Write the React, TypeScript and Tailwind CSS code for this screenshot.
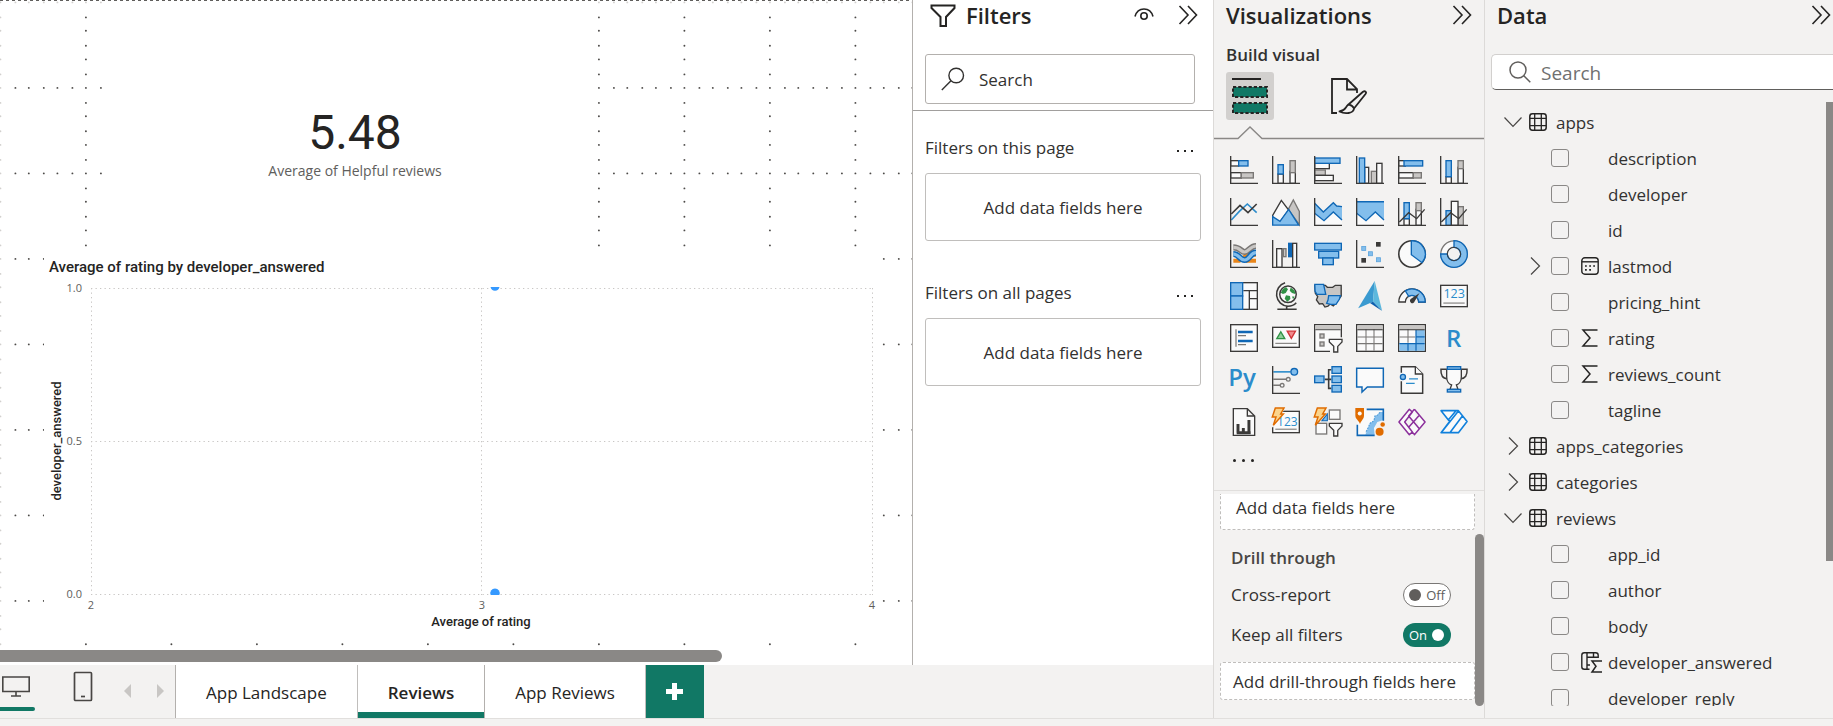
import React, { useState } from "react";

const K = "#3b3a39";
const BL = "#0f67b5";
const BF = "#83beec";
const GS = "#797775";
const GF = "#c8c6c4";
const W = "#fafafa";

type BoxProps = { x: number; y: number; w: number; h: number; f?: string; s?: string };

function Box({ x, y, w, h, f = W, s = K }: BoxProps) {
  return <rect x={x + 0.5} y={y + 0.5} width={w - 1} height={h - 1} fill={f} stroke={s} />;
}

const Axis = () => <path d="M.5 0V20.5H21" fill="none" stroke={K} />;

const Fold = () => (
  <path d="M2.5 .5H13L18.5 6V20.5H2.5Z M13 .5V6H18.5" fill={W} stroke={K} />
);

const MiniFunnel = () => (
  <path d="M11.5 11.5H21V13.5L17.8 16.8V21H14.8V16.8L11.5 13.5Z" fill={W} stroke={K} />
);

const Bolt = () => (
  <path d="M2.5 0H9L6.5 4.5H8.5L1 13L3 6.8H0.2Z" fill="#fbd48c" stroke="#e06c00" strokeWidth="1.1" />
);

const visuals: { name: string; art: React.ReactNode }[] = [
  {
    name: "Stacked bar chart",
    art: (
      <>
        <Box x={0} y={3} w={7} h={5} />
        <Box x={6} y={3} w={8} h={5} f={BF} s={BL} />
        <Box x={0} y={12} w={9} h={5} />
        <Box x={8} y={12} w={10} h={5} f={GF} s={GS} />
        <Axis />
      </>
    ),
  },
  {
    name: "Stacked column chart",
    art: (
      <>
        <Box x={4} y={13} w={5} h={8} />
        <Box x={4} y={6} w={5} h={8} f={BF} s={BL} />
        <Box x={13} y={11} w={5} h={10} />
        <Box x={13} y={3} w={5} h={10} f={GF} s={GS} />
        <Axis />
      </>
    ),
  },
  {
    name: "Clustered bar chart",
    art: (
      <>
        <Box x={0} y={5} w={12} h={5} />
        <Box x={0} y={10} w={9} h={5} f={GF} s={GS} />
        <Box x={0} y={14} w={15} h={5} />
        <Box x={0} y={1} w={20} h={5} f={BF} s={BL} />
        <Axis />
      </>
    ),
  },
  {
    name: "Clustered column chart",
    art: (
      <>
        <Box x={6} y={8} w={4} h={13} />
        <Box x={11} y={11} w={5} h={10} f={GF} s={GS} />
        <Box x={15} y={5} w={5} h={16} />
        <Box x={2} y={1} w={5} h={20} f={BF} s={BL} />
        <Axis />
      </>
    ),
  },
  {
    name: "100% stacked bar chart",
    art: (
      <>
        <Box x={0} y={3} w={6} h={5} />
        <Box x={4} y={3} w={15} h={5} f={BF} s={BL} />
        <Box x={0} y={12} w={12} h={5} />
        <Box x={11} y={12} w={7} h={5} f={GF} s={GS} />
        <Axis />
      </>
    ),
  },
  {
    name: "100% stacked column chart",
    art: (
      <>
        <Box x={4} y={15} w={5} h={6} />
        <Box x={4} y={3} w={5} h={13} f={BF} s={BL} />
        <Box x={13} y={8} w={5} h={13} />
        <Box x={13} y={3} w={5} h={7} f={GF} s={GS} />
        <Axis />
      </>
    ),
  },
  {
    name: "Line chart",
    art: (
      <>
        <path d="M1 16.5L7 10L13 4.5L20 11" fill="none" stroke="#2b8ccb" strokeWidth="1.2" />
        <path d="M1 12L7.5 5.5L13.5 11L20 4.5" fill="none" stroke={K} strokeWidth="1.2" />
        <Axis />
      </>
    ),
  },
  {
    name: "Area chart",
    art: (
      <>
        <path d="M12.5 8L16 1.5L20.5 10V20L12.5 9Z" fill={GF} stroke={GS} />
        <path d="M.5 13L7 1.8L12.5 9L6 18L.5 15Z" fill={W} stroke={K} />
        <path d="M.5 14L6 17.5L12.5 8.5L20 20.3H.5Z" fill={BF} stroke={BL} />
      </>
    ),
  },
  {
    name: "Stacked area chart",
    art: (
      <>
        <path d="M.5 11.5L7.5 17L14.5 10.5L21 16.5V20.5H.5Z" fill={W} />
        <path d="M.5 4L7 10.5L14.5 3.5L17 6L21 6.5V16.5L14.5 10.5L7.5 17L.5 11.5Z" fill={BF} />
        <path d="M.5 4L7 10.5L14.5 3.5L17 6L21 6.5M21 16.5L14.5 10.5L7.5 17L.5 11.5" fill="none" stroke={BL} />
        <Axis />
      </>
    ),
  },
  {
    name: "100% stacked area chart",
    art: (
      <>
        <path d="M.5 11.5L7.5 17L14.5 10.5L21 16.5V20.5H.5Z" fill={W} />
        <path d="M.5 2.8H21V16.5L14.5 10.5L7.5 17L.5 11.5Z" fill={BF} />
        <path d="M.5 2.8H21M21 16.5L14.5 10.5L7.5 17L.5 11.5" fill="none" stroke={BL} />
        <Axis />
      </>
    ),
  },
  {
    name: "Line and stacked column chart",
    art: (
      <>
        <Box x={4} y={15} w={5} h={6} />
        <Box x={4} y={3} w={5} h={13} f={BF} s={BL} />
        <Box x={13} y={8} w={5} h={13} />
        <Box x={13} y={3} w={5} h={7} f={GF} s={GS} />
        <path d="M1 18L8 11L14 15.5L20 8.5" fill="none" stroke={K} />
        <Axis />
      </>
    ),
  },
  {
    name: "Line and clustered column chart",
    art: (
      <>
        <Box x={4} y={9} w={5} h={12} f={BF} s={BL} />
        <Box x={13} y={6} w={5} h={15} f={GF} s={GS} />
        <Box x={8} y={2} w={6} h={19} />
        <path d="M1 18L8 11L14 15.5L20 8.5" fill="none" stroke={K} />
        <Axis />
      </>
    ),
  },
  {
    name: "Ribbon chart",
    art: (
      <>
        <path d="M2.5 15.5H7L13 11H19.5M12 15.5H19.5" fill="none" stroke="#e9861b" strokeWidth="3" />
        <path d="M2.5 5.5C8 5.5 8 9 11 9S15 4.5 19.5 4.5" fill="none" stroke={GS} strokeWidth="4.6" />
        <path d="M2.5 5.5C8 5.5 8 9 11 9S15 4.5 19.5 4.5" fill="none" stroke={GF} strokeWidth="2.4" />
        <path d="M2.5 10.5C7 10.5 7 15 11 15S15 9.5 19.5 9.5" fill="none" stroke={BL} strokeWidth="4.6" />
        <path d="M2.5 10.5C7 10.5 7 15 11 15S15 9.5 19.5 9.5" fill="none" stroke={BF} strokeWidth="2.4" />
        <Axis />
      </>
    ),
  },
  {
    name: "Waterfall chart",
    art: (
      <>
        <Box x={3} y={6} w={5} h={15} />
        <Box x={15} y={2} w={4} h={19} />
        <Box x={8} y={6} w={3} h={7} f={GF} s={GS} />
        <Box x={12} y={2} w={3} h={11} f={BL} s={BL} />
        <Axis />
      </>
    ),
  },
  {
    name: "Funnel",
    art: (
      <>
        <Box x={0} y={2} w={21} h={6} f={BF} s={BL} />
        <Box x={3} y={8} w={16} h={6} f={BF} s={BL} />
        <Box x={6} y={13} w={9} h={6} f={BF} s={BL} />
      </>
    ),
  },
  {
    name: "Scatter chart",
    art: (
      <>
        <g fill={K}>
          <rect x="15" y="1.5" width="3.5" height="3.5" />
          <rect x="4" y="13.5" width="3.5" height="3.5" />
        </g>
        <g fill={BF} stroke="#5ba3dc" strokeWidth=".6">
          <rect x="4.3" y="4.8" width="3" height="3" />
          <rect x="9.3" y="8.8" width="3" height="3" />
          <rect x="15.3" y="13.3" width="3" height="3" />
        </g>
        <Axis />
      </>
    ),
  },
  {
    name: "Pie chart",
    art: (
      <>
        <circle cx="10.5" cy="10.5" r="9.9" fill={W} stroke={K} strokeWidth="1.2" />
        <path d="M10 .6A9.9 9.9 0 0 1 18 17L10 11Z" fill={BF} stroke={BL} />
      </>
    ),
  },
  {
    name: "Donut chart",
    art: (
      <>
        <circle cx="10.5" cy="10.5" r="7.5" fill="none" stroke={GS} strokeWidth="5.8" />
        <circle cx="10.5" cy="10.5" r="7.5" fill="none" stroke={W} strokeWidth="3.8" />
        <path
          d="M10.5 .5A10 10 0 1 1 .5 10.5H5.5A5 5 0 1 0 10.5 5.5Z"
          fill={BF}
          stroke={BL}
        />
        <circle cx="10.5" cy="10.5" r="5" fill="none" stroke={K} strokeWidth=".7" />
      </>
    ),
  },
  {
    name: "Treemap",
    art: (
      <>
        <Box x={0} y={0} w={21} h={21} />
        <path d="M10 6.5H20.5M14.5 6.5V20.5M14.5 12.5H20.5" stroke={K} />
        <Box x={0} y={0} w={10} h={11} f={BF} s={BL} />
        <Box x={0} y={10} w={10} h={11} f={BF} s={BL} />
      </>
    ),
  },
  {
    name: "Map",
    art: (
      <>
        <circle cx="12" cy="9.2" r="6.2" fill={W} stroke={K} strokeWidth="1.1" />
        <path
          d="M8 5.5L10.5 3.8L12 5.5L10.3 8.2L8.2 9L6.6 8ZM14 4.2L17 6.5L17.5 9L15 8.3L13.3 6.5ZM10.5 10L13.5 10.5L13.8 12.8L11.5 14.8L9.5 12.5ZM15 10.8L17 10.8L15.8 13Z"
          fill="#2f9245"
        />
        <path d="M9.8 .6A9 9 0 0 0 12 18.2C14.6 18.2 16.6 17.3 18.2 15.6M11 18.2V20.4M4 20.4H18.5" fill="none" stroke={K} strokeWidth="1.2" />
      </>
    ),
  },
  {
    name: "Filled map",
    art: (
      <>
        <path
          d="M.6 2.5H8.5L10 4H14L16 2.5H20.4V10.5L17.5 14.5L14.5 18L12 16.5L10.5 18.2L8.2 18.8L6.5 16.2L4 16.5L1.8 13.5L2.8 11L1 8.5Z"
          fill={GF}
          stroke={K}
        />
        <path d="M.6 1.8H7.2L8.8 9.3H2.2L.8 7Z" fill={BF} stroke={BL} />
        <path d="M11 10.2H19.8L19 13L16.5 16.8H12.5L9.5 16L10.5 13.5Z" fill={BF} stroke={BL} />
      </>
    ),
  },
  {
    name: "Azure map",
    art: (
      <>
        <path d="M14 -.8L1.6 19.6L12.8 14.8Z" fill="#3a9ad0" />
        <path d="M14 -.8L12.8 14.8L19.6 21.5Z" fill="#5cb8dd" />
        <path d="M12.8 14.8L10.5 15.8L19.6 21.8Z" fill="#0a5fae" />
      </>
    ),
  },
  {
    name: "Gauge",
    art: (
      <>
        <path d="M.6 15A9.9 9.9 0 0 1 20.4 15H15.5A5 5 0 0 0 5.5 15Z" fill={W} stroke={K} />
        <path d="M5.5 6.6A9.9 9.9 0 0 1 20.4 15H15.5A5 5 0 0 0 8 10.7Z" fill={BF} stroke={BL} />
        <path d="M16.2 8.3L12.5 14.5A1.8 1.8 0 1 1 9.5 12.8Z" fill={K} />
      </>
    ),
  },
  {
    name: "Card",
    art: (
      <>
        <Box x={0} y={2} w={21} h={17} />
        <text x="10.6" y="12.3" textAnchor="middle" fontFamily="Open Sans, sans-serif" fontSize="9.4" fill="#2b8ccb">
          123
        </text>
        <path d="M2.5 15.8H18.5" stroke={GS} strokeWidth=".8" />
      </>
    ),
  },
  {
    name: "Multi-row card",
    art: (
      <>
        <Box x={0} y={0} w={21} h={21} />
        <path d="M4.5 4V17M6 8.7H12M6 15.4H12" stroke={GS} strokeWidth=".9" />
        <path d="M6 6H17M6 12.7H17" stroke={BL} strokeWidth="1.8" />
      </>
    ),
  },
  {
    name: "KPI",
    art: (
      <>
        <Box x={0} y={2} w={21} h={16} />
        <path d="M3.6 11L6.6 5.8L9.6 11Z" fill="#8fcf9a" stroke="#2f9245" />
        <path d="M11.4 5.4H17.6L14.5 10.8Z" fill="#f08a8c" stroke="#d13438" />
        <path d="M2.5 14.5H18.5" stroke={GS} strokeWidth=".8" />
      </>
    ),
  },
  {
    name: "Slicer",
    art: (
      <>
        <path d="M20.5 10V.5H.5V20.5H12" fill={W} stroke={K} />
        <path d="M1 1H20V4H1Z" fill={GF} />
        <path d="M1 4.3H20" stroke={K} strokeWidth=".7" />
        <Box x={4} y={7} w={4} h={4} f={GF} s={GS} />
        <Box x={4} y={13} w={4} h={4} f={GF} s={GS} />
        <MiniFunnel />
      </>
    ),
  },
  {
    name: "Table",
    art: (
      <>
        <Box x={0} y={0} w={21} h={21} />
        <path d="M1 1H20V4H1Z" fill={GF} />
        <path d="M1 9.7H20M1 14.7H20M7.5 4V20M13.5 4V20" stroke={GS} strokeWidth=".8" />
        <path d="M1 4.3H20" stroke={K} strokeWidth=".8" />
      </>
    ),
  },
  {
    name: "Matrix",
    art: (
      <>
        <Box x={0} y={0} w={21} h={21} />
        <path d="M1 1H20V4H1Z" fill={GF} />
        <path d="M13.5 4.5H20V20H1V14.7H13.5Z" fill={BF} />
        <path d="M1 9.7H13M7.5 4V14" stroke={GS} strokeWidth=".8" />
        <path d="M1 14.7H20M13.5 4.5V20M7.5 15V20M13.5 9.7H20" stroke={BL} strokeWidth=".9" />
        <path d="M1 4.3H20" stroke={K} strokeWidth=".8" />
      </>
    ),
  },
  {
    name: "R script visual",
    art: (
      <text x="4.5" y="17" fontFamily="Open Sans, sans-serif" fontSize="18" fontWeight="600" fill="#2b8ccb">
        R
      </text>
    ),
  },
  {
    name: "Python visual",
    art: (
      <text x="-1.4" y="15" fontFamily="Open Sans, sans-serif" fontSize="18" fontWeight="600" fill="#2b8ccb">
        Py
      </text>
    ),
  },
  {
    name: "Key influencers",
    art: (
      <>
        <path d="M1 4.4H14" stroke="#2b8ccb" strokeWidth="1.2" />
        <circle cx="16.7" cy="4.4" r="2.5" fill={BF} stroke={BL} />
        <path d="M1 10H10.5M1 14.5H6" stroke={GS} strokeWidth="1.1" />
        <circle cx="12.2" cy="10" r="1.4" fill={W} stroke={GS} />
        <circle cx="7.6" cy="14.5" r="1.4" fill={W} stroke={GS} />
        <Axis />
      </>
    ),
  },
  {
    name: "Decomposition tree",
    art: (
      <>
        <path d="M8 10H13M13 2.8H11V16.8H13" fill="none" stroke={K} strokeWidth="1.2" />
        <Box x={0} y={7} w={8} h={6} f={BF} s={BL} />
        <Box x={13} y={0} w={8} h={6} f={BF} s={BL} />
        <Box x={13} y={7} w={8} h={6} f={BF} s={BL} />
        <Box x={13} y={14} w={8} h={6} f={BF} s={BL} />
      </>
    ),
  },
  {
    name: "Q&A",
    art: <path d="M.5 1.7H20.5V15.7H8.5L4.5 19.5V15.7H.5Z" fill={W} stroke={BL} strokeWidth="1.1" />,
  },
  {
    name: "Narrative",
    art: (
      <>
        <path d="M2.5 5V.5H13L18.5 6V20.5H2.5V11.5" fill={W} stroke={K} strokeWidth="1.1" />
        <path d="M13 .5V6H18.5" fill={W} stroke={K} />
        <circle cx="3.7" cy="8.2" r="1.9" fill={BF} stroke={BL} />
        <path d="M8.3 9.7H15M6 13H12.5" stroke="#2b8ccb" />
      </>
    ),
  },
  {
    name: "Goals",
    art: (
      <>
        <path d="M5 2.5H.7C.5 7 2 9.5 5.5 9.5M16 2.5H20.3C20.5 7 19 9.5 15.5 9.5" fill="none" stroke={K} strokeWidth="1.1" />
        <path d="M5 2.5H16V8C16 11.5 14 13.7 12.3 14.2L13.5 17.5H7.5L8.7 14.2C7 13.7 5 11.5 5 8Z" fill={W} stroke={K} />
        <Box x={5} y={0} w={11} h={3} f={BF} s={BL} />
        <Box x={5} y={17} w={11} h={3} f={BF} s={BL} />
      </>
    ),
  },
  {
    name: "Paginated report",
    art: (
      <>
        <Fold />
        <path d="M6 12V18.5M10 15V18.5M14.2 9V18.5M5 18.5H15.5" stroke={K} strokeWidth="2.2" />
      </>
    ),
  },
  {
    name: "Card (new)",
    art: (
      <>
        <Box x={0} y={2} w={21} h={17} />
        <text x="11.5" y="13.3" textAnchor="middle" fontFamily="Open Sans, sans-serif" fontSize="9" fill="#2b8ccb">
          123
        </text>
        <path d="M2.5 15.9H18.5" stroke={GS} strokeWidth=".8" />
        <path d="M-1 1H9.5L6.5 5.5L1 14.5H-1Z" fill="#f3f2f1" />
        <Bolt />
      </>
    ),
  },
  {
    name: "Slicer (new)",
    art: (
      <>
        <Box x={11} y={1} w={9} h={8} s={GS} />
        <Box x={1} y={11} w={9} h={9} s={GS} />
        <path d="M6 9.5L10 4.5V9.5Z" fill={BF} stroke={BL} strokeWidth=".8" />
        <Bolt />
        <MiniFunnel />
      </>
    ),
  },
  {
    name: "ArcGIS Maps",
    art: (
      <>
        <path d="M1 1H20.5V9H15L14 21H1Z" fill={W} />
        <path d="M20.5 3H18L16 5.5L14.2 6L13.5 9.5L10.5 11.5L9 15L7 20H14L13.5 15L16 10.5L20.5 9Z" fill={BF} />
        <path d="M8 1H20.5V9.5M1 12.5V20.5H14" fill="none" stroke={BL} strokeWidth="1.2" />
        <path d="M18 3.2L16 5.5L14.2 6L13.5 9.5L10.5 11.5L9 15L7.2 18.5" fill="none" stroke="#4d9bd8" strokeWidth=".8" strokeDasharray="1.4 .8" />
        <path d="M-.5 0H6V5.5C6 8.5 4.5 8.5 3 12C1.5 8.5 -.5 8.5 -.5 5.5Z" fill="#e06c00" />
        <circle cx="2.8" cy="4.2" r="1.5" fill={W} />
        <circle cx="17.7" cy="17.8" r="3" fill="#e06c00" />
        <circle cx="20" cy="12.3" r="1.7" fill="#e06c00" />
      </>
    ),
  },
  {
    name: "Power Apps",
    art: (
      <path
        d="M8.5 1L.7 10.5L8.5 20L10.8 18L5 10.5L10.8 3ZM12.3 1L20.3 10.5L12.3 20L8 14.5L16 5.5M12.3 1L8 6L16 15.5"
        fill={W}
        stroke="#8b2f9b"
        strokeWidth="1.1"
        strokeLinejoin="round"
      />
    ),
  },
  {
    name: "Power Automate",
    art: (
      <path
        d="M.8 2H13.8L20.3 10.2L13.8 18.5H.8L7.2 10.2ZM6.2 9L12 2M1 18.3L13.8 2.2M7.4 18.5L16.8 6"
        fill={W}
        stroke="#1080dc"
        strokeWidth="1.2"
        strokeLinejoin="round"
      />
    ),
  },
];

const DoubleChevron = () => (
  <svg viewBox="0 0 20 20" className="size-5" fill="none" stroke="#252423" strokeWidth="1.6">
    <path d="M1.5 1L10 10L1.5 19M10 1L18.5 10L10 19" />
  </svg>
);

const TableIcon = () => (
  <svg viewBox="0 0 18 18" className="size-[18px] shrink-0" fill="none" stroke="#252423" strokeWidth="1.5">
    <rect x=".8" y=".8" width="16.4" height="16.4" rx="2.6" />
    <path d="M5.7 1V17M12.3 1V17M1 5.3H17M1 12.7H17" strokeWidth="1.3" />
  </svg>
);

const CalendarIcon = () => (
  <svg viewBox="0 0 18 18" className="size-[18px]" fill="none" stroke="#252423" strokeWidth="1.4">
    <rect x=".8" y=".8" width="16.4" height="16.4" rx="3" />
    <path d="M1 4.8H17" />
    <path d="M8.2 9H10M12.2 9H14M4 12.8H5.8M8.2 12.8H10M4 9H5.8M12.2 9H14" strokeWidth="1.7" />
  </svg>
);

const SigmaIcon = () => (
  <svg viewBox="0 0 18 18" className="size-[18px]" fill="none" stroke="#252423" strokeWidth="1.5">
    <path d="M16.5 .9H2L9 9L2 17.1H16.5" />
  </svg>
);

const CalculatedIcon = () => (
  <svg viewBox="0 0 21 21" className="size-[21px] shrink-0" fill="none" stroke="#252423" strokeWidth="1.4">
    <path d="M17.2 6V3.3A2.5 2.5 0 0 0 14.7 .8H3.3A2.5 2.5 0 0 0 .8 3.3V14.7A2.5 2.5 0 0 0 3.3 17.2H8.5M6 1V17M6 5.2H17M12.5 1V5M6 13H9" />
    <path d="M21 9H11L15 14.3L11 20H21" strokeWidth="1.5" />
  </svg>
);

const Chevron = ({ open }: { open: boolean }) => (
  <svg viewBox="0 0 18 18" className="size-[18px] shrink-0" fill="none" stroke="#484644" strokeWidth="1.2">
    <path d={open ? "M.5 4.5L9 13.5L17.5 4.5" : "M5 .5L13.5 9L5 17.5"} />
  </svg>
);

const majors = Array.from({ length: 11 }, (_, i) => i * 85.5);
const minors = [0, 15, 28.4, 43.4, 57, 72];
const ticks = majors.flatMap((m) => minors.map((o) => m + o));

function CanvasGrid() {
  const seen = (x: number, y: number) =>
    !(x > 102 && x < 590 && y < 260) && !(x > 44 && x < 877 && y > 256 && y < 640);
  const dots: React.ReactNode[] = [];
  const add = (x: number, y: number, faint: boolean) => {
    if (x < 914 && y < 650 && seen(x, y))
      dots.push(<circle key={`${x}-${y}`} cx={x} cy={y} r=".95" fill={faint ? "#d2d0ce" : "#4c4a48"} />);
  };
  majors.forEach((m, i) => {
    ticks.forEach((t, j) => {
      add(m + 0.4, t + 2.4, i === 0 || j === 0);
      if (j % 6 !== 0) add(t + 0.4, m + 2.4, i === 0);
    });
  });
  return (
    <svg aria-hidden="true" className="absolute inset-0 size-full">
      <path d="M0 .5H914" stroke="#605e5c" strokeDasharray="3 3" />
      {dots}
    </svg>
  );
}

function ScatterChart() {
  const grid = { stroke: "#c8c6c4", strokeDasharray: "1.3 3.2", fill: "none" };
  return (
    <svg viewBox="44 257 833 383" className="block w-full" role="img" aria-label="Average of rating by developer_answered">
      <rect x="44" y="257" width="833" height="383" fill="#fff" />
      <g fontFamily="Roboto, sans-serif" fontWeight="500" fill="#252423">
        <text x="49" y="272" fontSize="15">Average of rating by developer_answered</text>
        <text x="481" y="626" fontSize="13">
          <tspan textAnchor="middle">Average of rating</tspan>
        </text>
        <text transform="translate(61 441) rotate(-90)" fontSize="13" textAnchor="middle">developer_answered</text>
      </g>
      <g fontFamily="Open Sans, sans-serif" fontSize="11" fill="#605e5c">
        <g textAnchor="end">
          <text x="82" y="292">1.0</text>
          <text x="82" y="445">0.5</text>
          <text x="82" y="598">0.0</text>
        </g>
        <g textAnchor="middle">
          <text x="91" y="609">2</text>
          <text x="482" y="609">3</text>
          <text x="872" y="609">4</text>
        </g>
      </g>
      <path d="M91 288.5H872.5M91 441.5H872.5M91 594.5H872.5" {...grid} />
      <path d="M91.5 288V595M481.5 288V595M872.5 288V595" {...grid} />
      <g fill="#3599ff">
        <path d="M490.5 287H499.5A4.6 4.6 0 0 1 490.5 287Z" />
        <path d="M490.7 595A4.7 4.7 0 1 1 499.3 595Z" />
      </g>
    </svg>
  );
}

function FilterGroup({ title }: { title: string }) {
  return (
    <section className="flex flex-col">
      <div className="flex h-8 items-center justify-between pr-5">
        <h3>{title}</h3>
        <button aria-label={`${title} options`} className="flex h-2 items-end gap-[5px] pt-2">
          <i className="size-[2px] bg-[#252423]" />
          <i className="size-[2px] bg-[#252423]" />
          <i className="size-[2px] bg-[#252423]" />
        </button>
      </div>
      <button className="mt-[9px] mr-3 h-[68px] rounded-[3px] border border-[#c0bebc] bg-white pt-[2px]">
        Add data fields here
      </button>
    </section>
  );
}

function Toggle({ label, initial }: { label: string; initial: boolean }) {
  const [on, setOn] = useState(initial);
  return (
    <label className="relative flex h-10 items-center justify-between">
      {label}
      <input type="checkbox" role="switch" className="sr-only" checked={on} onChange={() => setOn(!on)} />
      <span
        className={
          on
            ? "flex h-6 w-12 items-center justify-between rounded-full bg-[#117865] pr-[7px] pl-[6px] text-[13px] leading-5 text-white"
            : "flex h-6 w-12 flex-row-reverse items-center justify-between rounded-full border border-[#797775] bg-white px-[5px] text-[13px] leading-5 text-[#605e5c]"
        }
      >
        {on ? "On" : "Off"}
        <i className={on ? "size-3 rounded-full bg-white" : "size-3 rounded-full bg-[#605e5c]"} />
      </span>
    </label>
  );
}

type Field = { name: string; icon?: React.ReactNode; expandable?: boolean };
const tables: { name: string; open: boolean; fields: Field[] }[] = [
  {
    name: "apps",
    open: true,
    fields: [
      { name: "description" },
      { name: "developer" },
      { name: "id" },
      { name: "lastmod", icon: <CalendarIcon />, expandable: true },
      { name: "pricing_hint" },
      { name: "rating", icon: <SigmaIcon /> },
      { name: "reviews_count", icon: <SigmaIcon /> },
      { name: "tagline" },
    ],
  },
  { name: "apps_categories", open: false, fields: [] },
  { name: "categories", open: false, fields: [] },
  {
    name: "reviews",
    open: true,
    fields: [
      { name: "app_id" },
      { name: "author" },
      { name: "body" },
      { name: "developer_answered", icon: <CalculatedIcon /> },
      { name: "developer_reply" },
    ],
  },
];

function FieldTree() {
  return (
    <ul>
      {tables.map((t) => (
        <li key={t.name}>
          <button className="flex h-9 w-full items-center pl-[19px]" aria-expanded={t.open}>
            <Chevron open={t.open} />
            <span className="mr-[9px] ml-[7px]">
              <TableIcon />
            </span>
            <span className="pt-[2px]">{t.name}</span>
          </button>
          <ul>
            {t.fields.map((f) => (
              <li key={f.name} className="flex h-9 items-center pl-[41px]">
                <span className="flex w-[25px] items-center">
                  {f.expandable && (
                    <button aria-label={`Expand ${f.name}`}>
                      <Chevron open={false} />
                    </button>
                  )}
                </span>
                <label className="flex items-center">
                  <input
                    type="checkbox"
                    className="size-[18px] appearance-none rounded-[3px] border border-[#8a8886] bg-transparent checked:bg-[#117865]"
                  />
                  <span className="ml-3 flex w-[27px] items-center">{f.icon}</span>
                  <span className="pt-[2px]">{f.name}</span>
                </label>
              </li>
            ))}
          </ul>
        </li>
      ))}
    </ul>
  );
}

const pages = ["App Landscape", "Reviews", "App Reviews"];

export default function App() {
  return (
    <div className="flex h-screen flex-col overflow-hidden bg-[#f3f2f1] font-['Open_Sans',sans-serif] text-[17px] leading-6 text-[#323130]">
      <div className="flex min-h-0 flex-1 border-b border-[#e1dfdd]">
        <div className="flex min-w-0 flex-1 flex-col">
          <div className="flex min-h-0 flex-1 bg-white">
            <main className="relative flex min-w-0 flex-1 flex-col overflow-hidden border-r border-[#b3b0ad]">
              <CanvasGrid />
              <section className="relative ml-[102px] flex h-[257px] w-[506px] shrink-0 flex-col items-center pt-[105px] font-['Roboto',sans-serif]">
                <div className="text-[48px] leading-[56px] text-[#252423]">5.48</div>
                <div className="font-['Open_Sans',sans-serif] text-[14px] leading-5 text-[#605e5c]">
                  Average of Helpful reviews
                </div>
              </section>
              <section className="relative mr-[35px] ml-11">
                <ScatterChart />
              </section>
              <div className="relative mt-auto mb-[3px] h-3 w-[722px] shrink-0 rounded-r-full bg-[#8a8886]" />
            </main>

            <aside className="flex w-[300px] shrink-0 flex-col">
              <header className="flex h-[54px] items-start pt-[3px] pr-[15px] pl-[17px]">
                <svg viewBox="0 0 26 24" className="mt-px h-6 w-[26px]" fill="none" stroke="#252423" strokeWidth="2">
                  <path d="M1.5 1.5H24.5V4L16 13V22H10.5V13L1.5 4Z" />
                </svg>
                <h2 className="ml-[10px] text-[22px] font-semibold text-[#252423]">Filters</h2>
                <button aria-label="Show filters" className="mt-[5px] ml-auto">
                  <svg viewBox="0 0 20 13" className="h-[13px] w-5" fill="none" stroke="#252423" strokeWidth="1.6">
                    <path d="M1 8.5C2.5 3 6 1 10 1S17.5 3 19 8.5" />
                    <circle cx="10" cy="8" r="3.2" />
                  </svg>
                </button>
                <button aria-label="Collapse filters" className="mt-[2px] ml-6">
                  <DoubleChevron />
                </button>
              </header>
              <div className="border-b border-[#a19f9d] pr-[18px] pb-[6px] pl-3">
                <label className="flex h-[50px] items-center rounded-[3px] border border-[#b3b0ad] pl-[15px]">
                  <svg viewBox="0 0 24 24" className="size-6 shrink-0" fill="none" stroke="#323130" strokeWidth="1.4">
                    <circle cx="15.2" cy="8.5" r="7.3" />
                    <path d="M10 13.8L.8 23" />
                  </svg>
                  <input
                    aria-label="Search filters"
                    placeholder="Search"
                    className="ml-[14px] w-full min-w-0 bg-transparent pt-[2px] outline-none placeholder:text-[#323130]"
                  />
                </label>
              </div>
              <div className="flex flex-col gap-9 pt-[21px] pl-3">
                <FilterGroup title="Filters on this page" />
                <FilterGroup title="Filters on all pages" />
              </div>
            </aside>
          </div>

          <footer className="flex h-[53px] shrink-0">
            <div className="flex w-[175px] items-start">
              <button aria-label="Desktop layout" className="flex h-[46px] w-[35px] flex-col items-start justify-between pt-[11px]">
                <svg viewBox="0 0 30 22" className="ml-[1px] h-[22px] w-[30px]" fill="none" stroke="#484644" strokeWidth="1.6">
                  <path d="M1.8 1H28.2V15.5H1.8ZM15 16V20M10 20H20" />
                </svg>
                <span className="h-1 w-full rounded-r-full bg-[#117865]" />
              </button>
              <button aria-label="Mobile layout" className="mt-[6px] ml-[38px]">
                <svg viewBox="0 0 20 32" className="h-8 w-5" fill="none" stroke="#484644" strokeWidth="1.7">
                  <rect x="1.5" y="1.5" width="17" height="28" rx="1" />
                  <path d="M8 25.5H12" />
                </svg>
              </button>
              <button aria-label="Previous page" className="mt-[19px] ml-[31px]">
                <svg viewBox="0 0 7 14" className="h-[14px] w-[7px]">
                  <path d="M7 0V14L0 7Z" fill="#c8c6c4" />
                </svg>
              </button>
              <button aria-label="Next page" className="mt-[19px] ml-[26px]">
                <svg viewBox="0 0 7 14" className="h-[14px] w-[7px]">
                  <path d="M0 0V14L7 7Z" fill="#c8c6c4" />
                </svg>
              </button>
            </div>
            {pages.map((p) => (
              <button
                key={p}
                className={
                  p === "Reviews"
                    ? "border-l border-[#c0bebc] bg-white px-[30px] pt-[3px] font-semibold text-[#252423] shadow-[inset_0_-6px_0_#117865]"
                    : "border-l border-[#b3b0ad] bg-white px-[30px] pt-[3px] text-[#252423]"
                }
              >
                {p}
              </button>
            ))}
            <button aria-label="New page" className="flex w-[59px] items-center justify-center border-l border-[#c0bebc] bg-[#117865]">
              <svg viewBox="0 0 17 17" className="size-[17px]">
                <path d="M6 0H11V6H17V11H11V17H6V11H0V6H6Z" fill="#fff" />
              </svg>
            </button>
          </footer>
        </div>

        <aside className="flex w-[271px] shrink-0 flex-col border-l border-[#dcdad8]">
          <header className="flex items-start justify-between pt-[3px] pr-3 pl-3">
            <h2 className="text-[22px] font-semibold text-[#252423]">Visualizations</h2>
            <button aria-label="Collapse visualizations" className="mt-[2px]">
              <DoubleChevron />
            </button>
          </header>
          <h3 className="mt-4 h-[26px] pl-3 font-semibold">Build visual</h3>
          <div className="mt-[3px] flex gap-[51px] pl-3">
            <button aria-label="Build visual" className="flex size-12 items-center justify-center rounded-[3px] bg-[#d2d0ce]">
              <svg viewBox="0 0 36 38" className="h-[38px] w-9">
                <path d="M0 2H29" stroke="#252423" strokeWidth="2" />
                <g fill="#117865" stroke="#252423" strokeWidth="2" strokeDasharray="3.2 2">
                  <rect x="1" y="10" width="34" height="10" />
                  <rect x="1" y="26" width="34" height="10" />
                </g>
              </svg>
            </button>
            <button aria-label="Format visual" className="flex size-12 items-center justify-center">
              <svg viewBox="0 0 36 38" className="h-[38px] w-9" fill="none" stroke="#252423" strokeWidth="1.8" strokeLinejoin="round">
                <path d="M6 36H1V2H16L26 12V16M16 2V12.5H26" strokeLinejoin="miter" />
                <path d="M17.5 27.5L32 14.8C34 13.5 36 15 34.5 17L23 31.5C21.5 28 20 28 17.5 27.5Z" />
                <path d="M17.5 27.5C14 30 15 33.5 8.5 34.5C14 37.5 22.5 36.5 23 31.5" />
              </svg>
            </button>
          </div>
          <svg viewBox="0 0 270 14" preserveAspectRatio="xMinYMin slice" className="mt-[6px] h-[14px] w-full shrink-0" fill="none" stroke="#8a8886" strokeWidth="1.4">
            <path d="M0 12.5H24L36 1L48 12.5H270" />
          </svg>
          <div className="mt-4 grid w-[254px] grid-cols-6 gap-[14px] pl-4">
            {visuals.map((v) => (
              <button key={v.name} aria-label={v.name} className="size-7">
                <svg viewBox="0 0 21 21" className="size-7 overflow-visible">
                  {v.art}
                </svg>
              </button>
            ))}
          </div>
          <button aria-label="Get more visuals" className="mt-[23px] ml-[19px] flex gap-[6px] self-start">
            <i className="size-[3px] rounded-full bg-[#252423]" />
            <i className="size-[3px] rounded-full bg-[#252423]" />
            <i className="size-[3px] rounded-full bg-[#252423]" />
          </button>
          <div className="mt-7 flex min-h-0 flex-1 border-t border-[#e1dfdd] pt-[3px] pb-3">
            <div className="flex min-w-0 flex-1 flex-col pl-[6px]">
              <button className="flex h-9 items-start rounded-b-[3px] border border-t-0 border-dashed border-[#c0bebc] bg-white pt-[2px] pl-[15px]">
                Add data fields here
              </button>
              <h3 className="mt-4 pl-[11px] font-semibold text-[#484644]">Drill through</h3>
              <div className="mt-[5px] pr-6 pl-[11px]">
                <Toggle label="Cross-report" initial={false} />
                <Toggle label="Keep all filters" initial={true} />
              </div>
              <button className="mt-[7px] flex h-[38px] items-center rounded-[3px] border border-dashed border-[#c0bebc] bg-white pt-[2px] pl-3 whitespace-nowrap">
                Add drill-through fields here
              </button>
            </div>
            <div className="mt-10 w-[9px] rounded-full bg-[#8a8886]" />
          </div>
        </aside>

        <aside className="flex w-[349px] shrink-0 flex-col border-l border-[#dcdad8]">
          <header className="flex h-[54px] items-start justify-between pt-[3px] pr-[2px] pl-3">
            <h2 className="text-[22px] font-semibold text-[#252423]">Data</h2>
            <button aria-label="Collapse data" className="mt-[2px]">
              <DoubleChevron />
            </button>
          </header>
          <label className="ml-[6px] flex h-9 items-center rounded-l-[5px] border border-r-0 border-[#d2d0ce] border-b-[#605e5c] bg-white pl-[17px]">
            <svg viewBox="0 0 22 22" className="size-[22px] shrink-0" fill="none" stroke="#605e5c" strokeWidth="1.5">
              <circle cx="9" cy="9" r="8" />
              <path d="M14.8 14.8L21.3 21.3" />
            </svg>
            <input
              aria-label="Search data"
              placeholder="Search"
              className="ml-[10px] w-full min-w-0 bg-transparent pt-[2px] text-[19px] outline-none placeholder:text-[#707070]"
            />
          </label>
          <div className="mt-3 mb-3 flex min-h-0 flex-1">
            <div className="mt-[2px] min-w-0 flex-1 overflow-hidden">
              <FieldTree />
            </div>
            <div className="h-[459px] w-[7px] bg-[#8a8886]" />
          </div>
        </aside>
      </div>
      <div className="h-[7px] shrink-0" />
    </div>
  );
}
